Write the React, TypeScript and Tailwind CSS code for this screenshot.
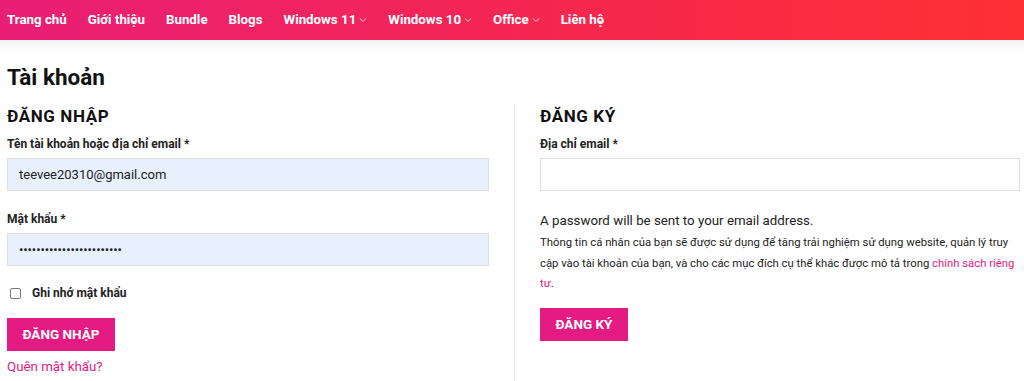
import React from "react";

function Chevron() {
  return (
    <svg width="8" height="6" viewBox="0 0 8 6" className="ml-[3px] mt-[1px]" fill="none">
      <path d="M0.8 1.3 L4 4.4 L7.2 1.3" stroke="rgba(255,255,255,0.75)" strokeWidth="1" />
    </svg>
  );
}

const navItems: { label: string; caret?: boolean }[] = [
  { label: "Trang chủ" },
  { label: "Giới thiệu" },
  { label: "Bundle" },
  { label: "Blogs" },
  { label: "Windows 11", caret: true },
  { label: "Windows 10", caret: true },
  { label: "Office", caret: true },
  { label: "Liên hệ" },
];

export default function App() {
  return (
    <div className="w-[1024px] h-[381px] overflow-hidden bg-white text-[#222] font-['Roboto','Liberation_Sans',sans-serif]">
      <header className="h-[40px] bg-[linear-gradient(90deg,#e91e76_0%,#f5274f_55%,#fe3033_100%)] flex items-center pl-[7px]">
        <nav className="flex items-center gap-[21px]">
          {navItems.map((n) => (
            <span key={n.label} className="flex items-center text-white text-[13.3px] font-bold leading-none">
              {n.label}
              {n.caret && <Chevron />}
            </span>
          ))}
        </nav>
      </header>
      <div className="h-[12px] bg-[linear-gradient(180deg,#f3f3f3,#ffffff)]" />
      <main className="pl-[7px]">
        <h1 className="text-[22.5px] font-bold leading-[26px] mt-[12px] text-[#111]">Tài khoản</h1>
        <div className="flex mt-[14px]">
          <section className="w-[482px] shrink-0 pt-[2px]">
            <h2 className="text-[17px] font-bold tracking-[0.6px] leading-[20px] text-[#111]">ĐĂNG NHẬP</h2>
            <label className="block text-[12px] font-bold mt-[10px] leading-[16px] text-[#222]">
              Tên tài khoản hoặc địa chỉ email *
            </label>
            <div className="mt-[6px] h-[33px] border border-[#dddddd] bg-[#e8f0fe] flex items-center pl-[11px] text-[13px] text-[#222]">
              teevee20310@gmail.com
            </div>
            <label className="block text-[12px] font-bold mt-[20px] leading-[16px] text-[#222]">Mật khẩu *</label>
            <div className="mt-[6px] h-[33px] border border-[#dddddd] bg-[#e8f0fe] flex items-center pl-[11px] text-[13px] tracking-[-0.1px] text-[#222]">
              ••••••••••••••••••••••••
            </div>
            <div className="flex items-center mt-[18px]">
              <span className="ml-[3px] w-[11px] h-[11px] border border-[#777] rounded-[2px] bg-white" />
              <span className="ml-[11px] text-[12px] font-bold text-[#222]">Ghi nhớ mật khẩu</span>
            </div>
            <button className="mt-[16px] h-[33px] w-[108px] bg-[#e31b83] text-white text-[13.5px] font-bold">
              ĐĂNG NHẬP
            </button>
            <div className="mt-[6px] text-[13.3px] leading-[20px] text-[#e5197f]">Quên mật khẩu?</div>
          </section>
          <div className="ml-[25px] w-px shrink-0 bg-[#ececec] h-[300px]" />
          <section className="ml-[25px] w-[480px] shrink-0 pt-[2px]">
            <h2 className="text-[17px] font-bold tracking-[0.6px] leading-[20px] text-[#111]">ĐĂNG KÝ</h2>
            <label className="block text-[12px] font-bold mt-[10px] leading-[16px] text-[#222]">Địa chỉ email *</label>
            <div className="mt-[6px] h-[33px] border border-[#dddddd] bg-white" />
            <p className="mt-[21px] text-[13.3px] leading-[18px] text-[#222]">A password will be sent to your email address.</p>
            <p className="mt-[3px] text-[11.3px] leading-[20.5px] text-[#222]">
              Thông tin cá nhân của bạn sẽ được sử dụng để tăng trải nghiệm sử dụng website, quản lý truy cập vào tài khoản của bạn, và cho các mục đích cụ thể khác được mô tả trong{" "}
              <span className="text-[#e5197f]">chính sách riêng tư</span>.
            </p>
            <button className="mt-[13px] h-[33px] w-[88px] bg-[#e31b83] text-white text-[13.5px] font-bold">
              ĐĂNG KÝ
            </button>
          </section>
        </div>
      </main>
    </div>
  );
}
